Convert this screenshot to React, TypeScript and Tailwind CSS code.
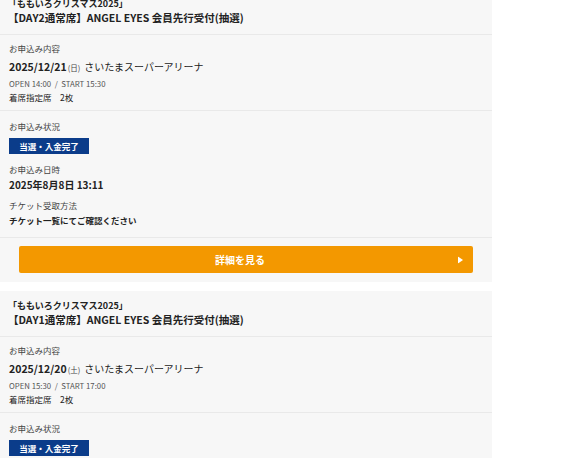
import React from "react";

type Item = {
  day: string;
  date: string;
  dow: string;
  open: string;
  start: string;
  showDetail?: boolean;
};

const items: Item[] = [
  { day: "DAY2", date: "2025/12/21", dow: "日", open: "14:00", start: "15:30", showDetail: true },
  { day: "DAY1", date: "2025/12/20", dow: "土", open: "15:30", start: "17:00", showDetail: true },
];

function Card({ item, first }: { item: Item; first?: boolean }) {
  return (
    <div className={`w-[492px] bg-[#f7f7f7] text-[#222] ${first ? "mt-[-11px]" : "mt-[9px]"}`}>
      <div className="px-[8px] pt-[8px] pb-[8px]">
        <div className="text-[9px] font-bold leading-[13px]">「ももいろクリスマス2025」</div>
        <div className="text-[10.5px] font-bold leading-[16px]">
          【{item.day}通常席】ANGEL EYES 会員先行受付(抽選)
        </div>
      </div>
      <div className="h-px bg-[#e9e9e9]" />
      <div className="px-[9px] pt-[7px] pb-[7px]">
        <div className="text-[8.5px] leading-[12px] text-[#444]">お申込み内容</div>
        <div className="mt-[5px] flex items-baseline leading-[16px]">
          <span className="text-[10.5px] font-bold">{item.date}</span>
          <span className="ml-[1px] text-[7.5px] text-[#444]">({item.dow})</span>
          <span className="ml-[4px] text-[10px]">さいたまスーパーアリーナ</span>
        </div>
        <div className="mt-[2px] text-[7.8px] leading-[11px] text-[#555]">
          OPEN {item.open}&nbsp;&nbsp;/&nbsp;&nbsp;START {item.start}
        </div>
        <div className="mt-[2px] text-[8.5px] leading-[12px]">着席指定席　2枚</div>
      </div>
      <div className="h-px bg-[#e9e9e9]" />
      <div className="px-[9px] pt-[9px] pb-[10px]">
        <div className="text-[8.5px] leading-[12px] text-[#444]">お申込み状況</div>
        <div className="mt-[6px] flex h-[16px] w-[80px] items-center justify-center bg-[#0b3c8a] text-[8.5px] font-bold text-white">
          当選・入金完了
        </div>
        <div className="mt-[9px] text-[8.5px] leading-[12px] text-[#444]">お申込み日時</div>
        <div className="mt-[2px] text-[10px] font-bold leading-[15px]">2025年8月8日 13:11</div>
        <div className="mt-[7px] text-[8.5px] leading-[12px] text-[#444]">チケット受取方法</div>
        <div className="mt-[3px] text-[8.5px] font-bold leading-[13px]">チケット一覧にてご確認ください</div>
      </div>
      {item.showDetail && (
        <>
          <div className="h-px bg-[#e9e9e9]" />
          <div className="px-[19px] pt-[8px] pb-[9px]">
            <div className="relative flex h-[27px] items-center justify-center rounded-[2px] bg-[#f39800] pr-[12px] text-[10px] font-bold text-white">
              詳細を見る
              <span className="absolute right-[10px] top-1/2 -translate-y-1/2">
                <svg width="5" height="7" viewBox="0 0 5 7">
                  <path d="M0 0 L5 3.5 L0 7 Z" fill="#fff" />
                </svg>
              </span>
            </div>
          </div>
        </>
      )}
    </div>
  );
}

export default function App() {
  return (
    <div
      className="h-[458px] w-[586px] overflow-hidden bg-white"
      style={{ fontFamily: '"Noto Sans CJK JP", "Noto Sans", sans-serif' }}
    >
      {items.map((it, i) => (
        <Card key={i} item={it} first={i === 0} />
      ))}
    </div>
  );
}
